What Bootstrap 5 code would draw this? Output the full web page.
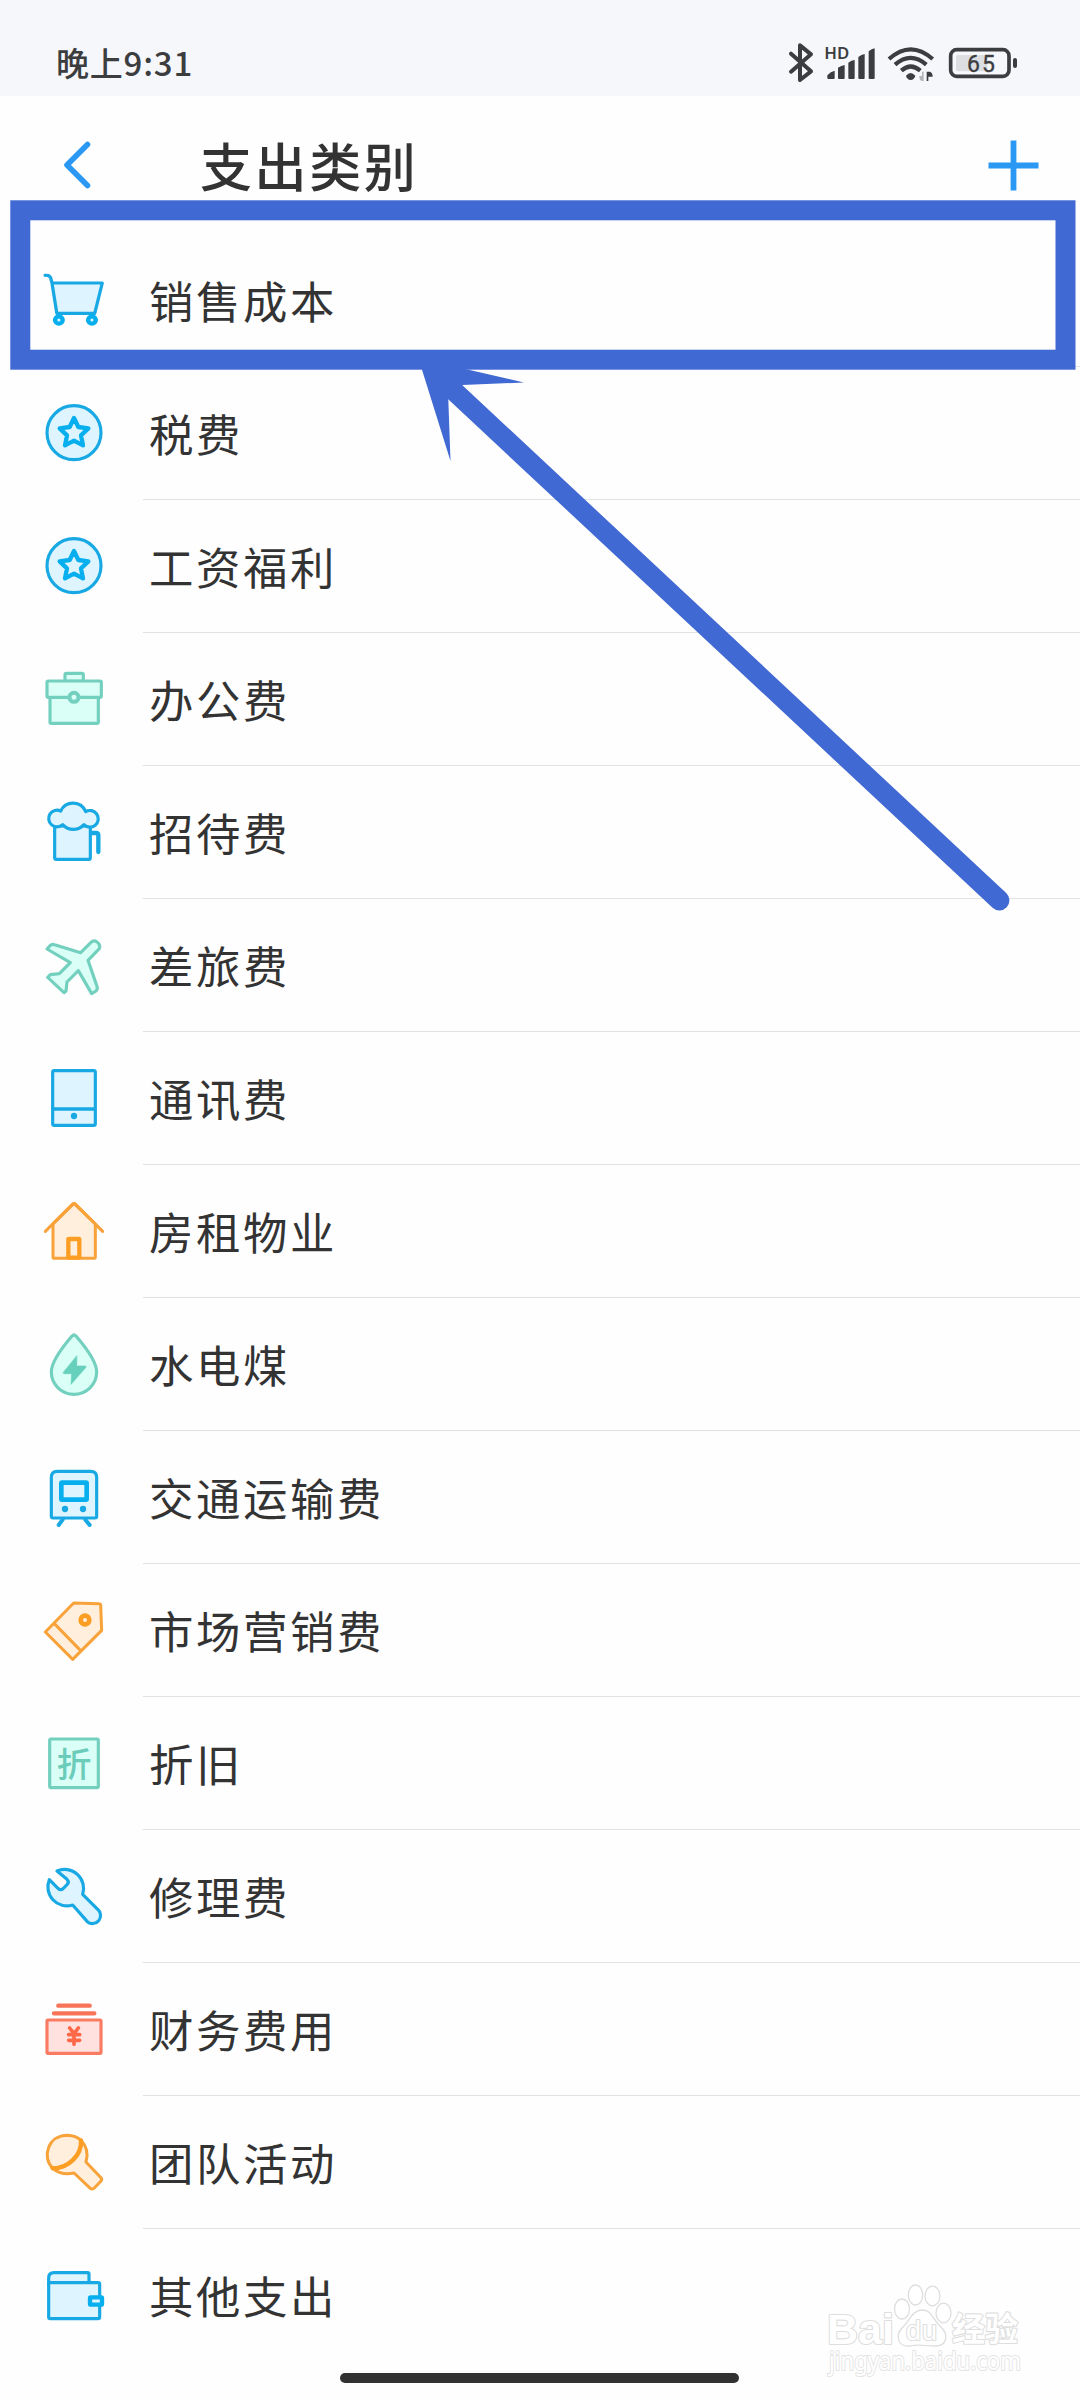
<!DOCTYPE html>
<html lang="zh-CN">
<head>
<meta charset="utf-8">
<meta name="viewport" content="width=device-width, initial-scale=1">
<title>支出类别</title>
<link href="https://cdn.jsdelivr.net/npm/bootstrap@5.3.0/dist/css/bootstrap.min.css" rel="stylesheet">
<style>
body{font-family:"Noto Sans CJK SC",sans-serif;color:#333;background:#fefefe;width:1080px;height:2400px;overflow:hidden}
svg{display:block;flex:none;overflow:visible;stroke-linecap:round;stroke-linejoin:round}
.flat{stroke-linecap:butt;stroke-linejoin:miter}
.statusbar{height:96px;background:#f5f7fb;padding:30px 62px 0 56px;color:#3c3d3f}
.clock{font-size:33px;font-weight:500;line-height:48px;letter-spacing:.8px;padding-bottom:3px}
.status-icons{gap:10px}
.titlebar{height:138px;padding:0 41px 0 64px}
.page-title{font-size:52px;font-weight:500;letter-spacing:2.6px;line-height:76px;margin-left:109px}
.cat{height:133px;padding:0 0 1px 38px}
.cat-name{margin:0 0 -1px 33px;padding:0 0 0 6px;height:133px;font-size:44.4px;letter-spacing:2.6px;line-height:60px;border-bottom:1px solid #e2e2e2}
.cat:last-child .cat-name{border-color:transparent}
.b{stroke:#18a9e4;fill:#def5ff;stroke-width:9.5}
.g{stroke:#74d0be;fill:#d9fff7;stroke-width:9.5}
.o{stroke:#f8a23a;fill:#ffefdc;stroke-width:9}
.r{stroke:#f97b62;fill:#ffe2e0;stroke-width:9.5}
.homebar{left:340px;top:2373px;width:399px;height:10px;background:#323232}
.wm text{fill:#fff;stroke:#dedede;stroke-width:2.2;paint-order:stroke}
.wm .site{stroke:#e4e4e4;stroke-width:2}
</style>
</head>
<body class="position-relative">
<header>
  <div class="statusbar d-flex align-items-center justify-content-between">
    <div class="clock">晚上9:31</div>
    <div class="status-icons d-flex align-items-center">
      <svg width="26" height="48" viewBox="144 117 78 144" fill="none" stroke="#3c3d3f" stroke-width="12"><path d="M153 161 213 214 180 240V136L213 163 153 215"/></svg>
      <svg width="53" height="48" viewBox="252 117 159 144" fill="#3c3d3f"><text x="253" y="177" font-family="Noto Sans" font-size="49" font-weight="600" textLength="75" lengthAdjust="spacingAndGlyphs">HD</text><path d="M262 226q10-12 22-14v22q0 3-3 3h-16q-3 0-3-3zM294 203q10-6 20-8v39q0 3-3 3h-14q-3 0-3-3zM325 188q9-7 19-8v54q0 3-3 3h-13q-3 0-3-3zM355 171q9-8 19-9v72q0 3-3 3h-13q-3 0-3-3zM386 154q9-8 18-9v89q0 3-3 3h-12q-3 0-3-3z"/></svg>
      <svg class="flat" width="48" height="48" viewBox="441 117 144 144" fill="none" stroke="#3c3d3f" stroke-width="12.5"><path d="M447 177q65-58 131 0M465 194q47-41 94 0M484 212q28-25 57 0"/><path d="M498 227q14-16 28 0-3 12-14 13-11-1-14-13z" fill="#3c3d3f" stroke="none"/><path d="M551 215v28h-6q-7-3-7-15h8v-13z" fill="#b4b5b8" stroke="none"/><path d="M560 215v28h5v-13h13q0-12-8-15z" fill="#3c3d3f" stroke="none"/></svg>
      <svg width="73" height="48" viewBox="615 117 219 144"><rect x="632" y="149" width="175" height="80" rx="18" fill="none" stroke="#3c3d3f" stroke-width="11"/><rect x="648" y="165" width="94" height="49" rx="7" fill="#dcdee2"/><text x="681" y="215" font-family="Roboto" font-size="69" font-weight="400" fill="#3c3d3f" stroke="#3c3d3f" stroke-width="1" textLength="84">65</text><rect x="819" y="174" width="12" height="30" rx="6" fill="#3c3d3f"/></svg>
    </div>
  </div>
  <nav class="titlebar d-flex align-items-center">
    <svg width="27" height="48" viewBox="0 0 27 48" fill="none" stroke="#2b99f3" stroke-width="5.6"><path d="M23.5 3.5 3 24 23.5 44.5"/></svg>
    <h1 class="page-title mb-0">支出类别</h1>
    <svg class="ms-auto flat" width="51" height="51" viewBox="0 0 51 51" fill="none" stroke="#2b99f3" stroke-width="5.8"><path d="M.5 25.5h50M25.5.5v50"/></svg>
  </nav>
</header>
<ul class="list-unstyled mb-0">
  <li class="cat d-flex align-items-center"><svg width="72" height="72" viewBox="110.4 792 209 216" preserveAspectRatio="none"><path class="b" d="M131 826q17-2 18 15l2 8h146l-22 91H165l-14-91"/><g fill="#def5ff" stroke="#08afee" stroke-width="13"><circle cx="171" cy="960" r="11"/><circle cx="267" cy="960" r="11"/></g></svg><div class="cat-name flex-grow-1 d-flex align-items-center">销售成本</div></li>
  <li class="cat d-flex align-items-center"><svg width="72" height="72" viewBox="114 51 216 216"><circle class="b" cx="222" cy="158" r="81"/><path d="M222 114l13 27 30 4-22 21 6 30-27-14-27 14 6-30-22-21 30-4z" fill="#def5ff" stroke="#08afee" stroke-width="13"/></svg><div class="cat-name flex-grow-1 d-flex align-items-center">税费</div></li>
  <li class="cat d-flex align-items-center"><svg width="72" height="72" viewBox="114 51 216 216"><circle class="b" cx="222" cy="158" r="81"/><path d="M222 114l13 27 30 4-22 21 6 30-27-14-27 14 6-30-22-21 30-4z" fill="#def5ff" stroke="#08afee" stroke-width="13"/></svg><div class="cat-name flex-grow-1 d-flex align-items-center">工资福利</div></li>
  <li class="cat d-flex align-items-center"><svg width="72" height="72" viewBox="114 849 216 216"><g class="g"><rect x="195" y="880" width="55" height="24" rx="4"/><rect x="150" y="950" width="145" height="80" rx="4"/><rect x="141" y="903" width="163" height="49" rx="4"/><circle cx="222" cy="952" r="13.5" stroke-width="12"/></g></svg><div class="cat-name flex-grow-1 d-flex align-items-center">办公费</div></li>
  <li class="cat d-flex align-items-center"><svg width="72" height="72" viewBox="114 48 216 216"><g class="b"><path d="M164 138h107v95q0 5-5 5h-97q-5 0-5-5z"/><path d="M182 93a41 41 0 0 1 75 2A25 25 0 1 1 252 134 43 43 0 0 1 188 134 25 25 0 1 1 182 93z"/><path d="M275 159h13q7 0 7 7v50" fill="none" stroke-width="13"/></g></svg><div class="cat-name flex-grow-1 d-flex align-items-center">招待费</div></li>
  <li class="cat d-flex align-items-center"><svg width="72" height="72" viewBox="114 447 216 216"><path class="g" d="M141 507l10-11q5-5 13-2l78 24 31-31q8-8 18-1 11 8 7 20l-34 35 27 78q3 8-3 14l-13 8-40-69-34 34-3 27-6 5-49-46 8-8 27-3 33-33z"/></svg><div class="cat-name flex-grow-1 d-flex align-items-center">差旅费</div></li>
  <li class="cat d-flex align-items-center"><svg width="72" height="72" viewBox="114 846 216 216"><g class="b"><rect x="158" y="872" width="128" height="164" rx="5"/><path d="M160 987h124" stroke-width="11"/></g><circle cx="222" cy="1008" r="9.5" fill="#18a9e4"/></svg><div class="cat-name flex-grow-1 d-flex align-items-center">通讯费</div></li>
  <li class="cat d-flex align-items-center"><svg width="72" height="72" viewBox="114 45 216 216"><g class="o"><path d="M159 132v98q0 5 5 5h117q5 0 5-5v-98l-64-62z"/><path d="M136 154 217 73q5-5 10 0l81 81" fill="none"/><rect x="205" y="177" width="33" height="56" rx="2" stroke="#fd9e24" stroke-width="13"/></g></svg><div class="cat-name flex-grow-1 d-flex align-items-center">房租物业</div></li>
  <li class="cat d-flex align-items-center"><svg width="72" height="72" viewBox="114 444 216 216"><path class="g" d="M216 468q6-6 12 0 62 72 62 108a68 67 0 0 1-136 0q0-36 62-108z"/><path d="M230 528l-40 49q-2 4 3 4h22l-2 32 45-51q2-4-3-4h-24z" fill="#66d0bc" stroke="#66d0bc" stroke-width="2"/></svg><div class="cat-name flex-grow-1 d-flex align-items-center">水电煤</div></li>
  <li class="cat d-flex align-items-center"><svg width="72" height="72" viewBox="114 843 216 216"><g class="b"><path d="M188 1019l-12 16M256 1019l13 16" stroke-width="12"/><path d="M172 874h100q18 0 18 18v117q0 5-5 5H159q-5 0-5-5V892q0-18 18-18z"/><rect x="184" y="908" width="76" height="51" rx="2" stroke="#08afee" stroke-width="14"/></g><g fill="#18a9e4"><circle cx="195" cy="987" r="9.5"/><circle cx="249" cy="987" r="9.5"/></g></svg><div class="cat-name flex-grow-1 d-flex align-items-center">交通运输费</div></li>
  <li class="cat d-flex align-items-center"><svg width="72" height="72" viewBox="114 102 216 216"><g class="o"><path d="M221 129l76 2q5 0 5 5l3 75-87 87-82-82zM163 191l76 78"/><circle cx="255" cy="180" r="13" stroke="#fd9e24" stroke-width="14"/></g></svg><div class="cat-name flex-grow-1 d-flex align-items-center">市场营销费</div></li>
  <li class="cat d-flex align-items-center"><svg width="72" height="72" viewBox="114 501 216 216"><rect class="g" x="149" y="537" width="146" height="146" rx="4"/><text x="170" y="652" font-size="104" font-weight="500" fill="#6accb9">折</text></svg><div class="cat-name flex-grow-1 d-flex align-items-center">折旧</div></li>
  <li class="cat d-flex align-items-center"><svg width="72" height="72" viewBox="114 900 216 216"><path class="b" d="M171 933a57 57 0 0 1 77 70l45 45a23 23 0 0 1-31 37l-44-50a57 57 0 0 1-70-76l26 26q8 8 16 0l11-11q8-8 0-16z"/></svg><div class="cat-name flex-grow-1 d-flex align-items-center">修理费</div></li>
  <li class="cat d-flex align-items-center"><svg width="72" height="72" viewBox="114 99 216 216"><g class="r"><rect x="141" y="180" width="162" height="100" rx="3"/><path d="M175 137h94M162 160h121" stroke-width="13" stroke="#f77459"/><path d="M209 204l13 17 13-17M222 221v32M206 224h33M206 241h33" fill="none" stroke="#ff6847" stroke-width="11"/></g></svg><div class="cat-name flex-grow-1 d-flex align-items-center">财务费用</div></li>
  <li class="cat d-flex align-items-center"><svg width="72" height="72" viewBox="114 498 216 216"><g class="o"><path d="M243 541q26 27 15 65l45 47q4 5 0 10l-20 21q-5 5-12 1l-49-46q-39 8-64-14z"/><path d="M158 625C124 590 145 526 202 526q26 1 41 15c3 44-38 84-85 84z"/><path d="M243 541c3 44-38 84-85 84" stroke="#fd9e24" stroke-width="13" fill="none"/></g></svg><div class="cat-name flex-grow-1 d-flex align-items-center">团队活动</div></li>
  <li class="cat d-flex align-items-center"><svg width="72" height="72" viewBox="114 897 216 216"><g class="b"><path d="M267 968v-26q0-4-4-4H162q-16 0-16 16v18"/><path d="M146 968h148q5 0 5 5v98q0 5-5 5H151q-5 0-5-5z"/><rect x="270" y="1012" width="36" height="22" rx="2" stroke="#08afee" stroke-width="13"/></g></svg><div class="cat-name flex-grow-1 d-flex align-items-center">其他支出</div></li>
</ul>

<!-- highlight frame and pointer laid over the list -->
<svg class="position-absolute top-0 start-0" width="1080" height="910" viewBox="0 0 1080 910" fill="none"><rect class="flat" x="20.3" y="210.3" width="1045.2" height="149.4" stroke="#4169d3" stroke-width="20"/><path d="M454.5 391.5 999.4 900.4" stroke="#4169d3" stroke-width="20"/><path d="M418.4 358.3 450.5 461 448.3 399 462.5 385 524 382.5z" fill="#4169d3"/></svg>

<!-- site watermark -->
<svg class="wm position-absolute top-0 start-0" width="1080" height="2400" viewBox="0 0 1080 2400" fill="#fff" stroke="#dedede" stroke-width="1.3">
  <text x="827" y="2344" font-family="Liberation Sans" font-weight="700" font-size="43" textLength="67" lengthAdjust="spacingAndGlyphs">Bai</text>
  <ellipse cx="902" cy="2309" rx="7.5" ry="10"/><ellipse cx="915.5" cy="2295" rx="7.2" ry="10"/><ellipse cx="932.5" cy="2296" rx="7.5" ry="9.8"/><ellipse cx="943.5" cy="2313" rx="7.5" ry="9.8"/>
  <path d="M922 2310c10 0 10 9 19 17 8 8 6 19-6 19-8 0-18-2-25 0-12 1-15-10-8-18 8-7 10-18 20-18z"/>
  <text x="906" y="2339.5" font-family="Liberation Sans" font-size="27" textLength="31">du</text>
  <text x="952" y="2341" font-family="Noto Sans CJK SC" font-weight="700" font-size="33">经验</text>
  <text class="site" x="829" y="2370" font-family="Noto Sans" font-size="25" textLength="192" lengthAdjust="spacingAndGlyphs">jingyan.baidu.com</text>
</svg>
<div class="homebar position-absolute rounded-pill"></div>
<script src="https://cdn.jsdelivr.net/npm/bootstrap@5.3.0/dist/js/bootstrap.bundle.min.js"></script>
</body>
</html>
